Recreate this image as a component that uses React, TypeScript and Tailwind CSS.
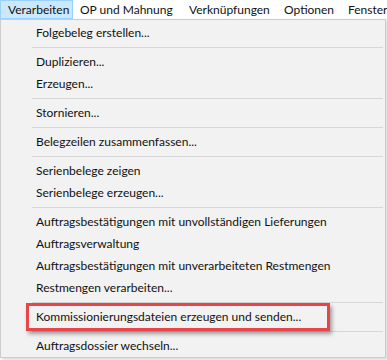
import React from "react";

type Entry = { label: string; highlighted?: boolean } | "sep";

// widths so the labels start where they do in the window's menu bar
const menuBar = [
  { label: "Verarbeiten", w: "w-[73px]" },
  { label: "OP und Mahnung", w: "w-[109px]" },
  { label: "Verknüpfungen", w: "w-[95px]" },
  { label: "Optionen", w: "w-[64px]" },
  { label: "Fenster", w: "w-[46px]" },
];

const entries: Entry[] = [
  { label: "Folgebeleg erstellen..." },
  "sep",
  { label: "Duplizieren..." },
  { label: "Erzeugen..." },
  "sep",
  { label: "Stornieren..." },
  "sep",
  { label: "Belegzeilen zusammenfassen..." },
  "sep",
  { label: "Serienbelege zeigen" },
  { label: "Serienbelege erzeugen..." },
  "sep",
  { label: "Auftragsbestätigungen mit unvollständigen Lieferungen" },
  { label: "Auftragsverwaltung" },
  { label: "Auftragsbestätigungen mit unverarbeiteten Restmengen" },
  { label: "Restmengen verarbeiten..." },
  "sep",
  { label: "Kommissionierungsdateien erzeugen und senden...", highlighted: true },
  "sep",
  { label: "Auftragsdossier wechseln..." },
];

export default function App() {
  return (
    <div
      className="w-[387px] h-[360px] bg-white overflow-hidden text-[12px] text-[#111]"
      style={{ fontFamily: '"Segoe UI", Lato, "Noto Sans", sans-serif' }}
    >
      {/* menu bar */}
      <div className="flex h-[19px] items-stretch whitespace-nowrap">
        {menuBar.map((m, i) => (
          <div
            key={m.label}
            className={
              i === 0
                ? `${m.w} shrink-0 pl-[7px] flex items-center border border-[#99d1ff] bg-[#cce8ff] h-[19px]`
                : `${m.w} shrink-0 pl-[7px] flex items-center h-[19px]`
            }
          >
            {m.label}
          </div>
        ))}
      </div>

      {/* dropdown */}
      <div className="w-[386px] h-[339px] bg-[#f2f2f2] border border-[#cccccc] pt-[2px] shadow-[2px_2px_3px_rgba(0,0,0,0.15)]">
        {entries.map((e, i) =>
          e === "sep" ? (
            <div key={i} className="h-[7px] flex items-center pl-[31px] pr-[2px]">
              <div className="h-px w-full bg-[#d7d7d7]" />
            </div>
          ) : (
            <div key={i} className="h-[22px] flex items-center pl-[35px] relative">
              {e.highlighted && (
                <div className="absolute left-[25px] top-[-3px] w-[304px] h-[28px] border-[3px] border-[#e8454a] shadow-[2px_3px_4px_rgba(0,0,0,0.35)]" />
              )}
              <span className="relative whitespace-nowrap">{e.label}</span>
            </div>
          )
        )}
      </div>
    </div>
  );
}
